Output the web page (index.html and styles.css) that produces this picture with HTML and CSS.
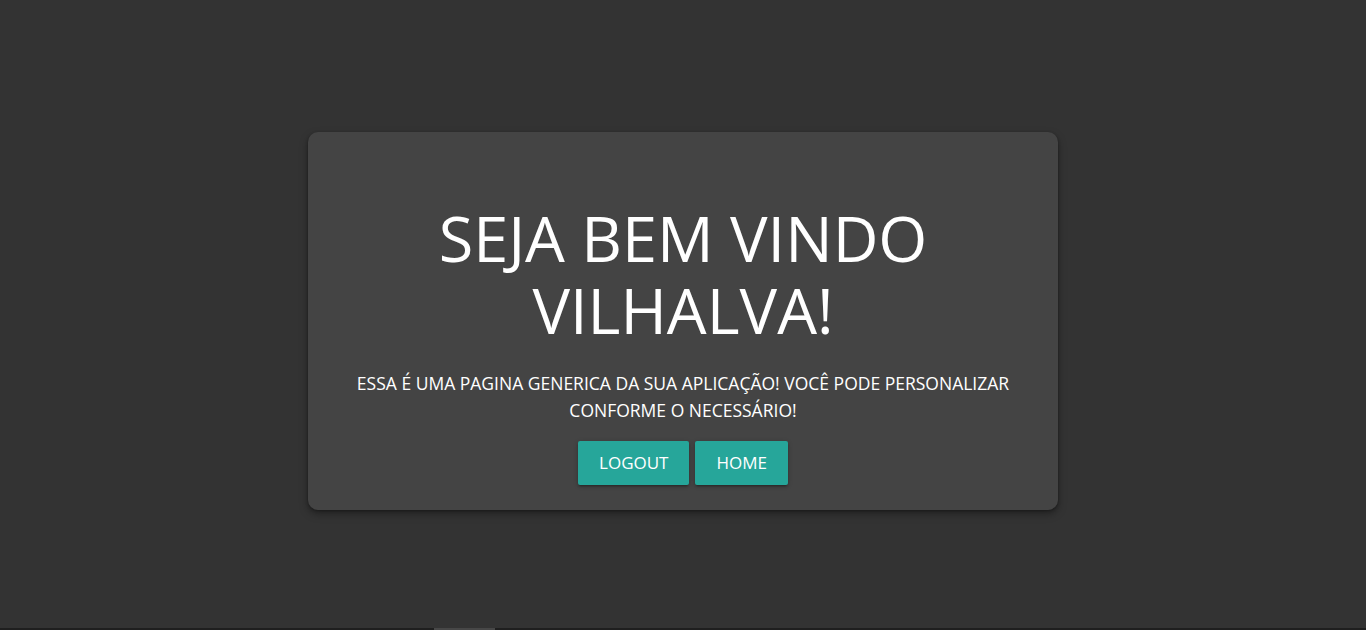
FILE: index.html
```html
<!DOCTYPE html>
<html lang="pt-BR">
<head>
<meta charset="utf-8">
<title>Bem vindo</title>
<link rel="stylesheet" href="styles.css">
</head>
<body>
<main class="page">
  <section class="card">
    <h1 class="title">SEJA BEM VINDO VILHALVA!</h1>
    <p class="lead">ESSA É UMA PAGINA GENERICA DA SUA APLICAÇÃO! VOCÊ PODE PERSONALIZAR CONFORME O NECESSÁRIO!</p>
    <div class="actions">
      <a class="btn" href="#">LOGOUT</a>
      <a class="btn" href="#">HOME</a>
    </div>
  </section>
</main>
<div class="scrollbar"><div class="thumb"></div></div>
</body>
</html>
```
FILE: styles.css
```css
html, body {
  margin: 0;
  height: 100%;
}
body {
  background: #333333;
  font-family: "Open Sans", "Noto Sans", sans-serif;
  color: #ffffff;
  overflow: hidden;
}
.page {
  display: flex;
  justify-content: center;
  padding-top: 132px;
}
.card {
  box-sizing: border-box;
  width: 750px;
  height: 378px;
  background: #444444;
  border-radius: 10px;
  box-shadow: 0 4px 8px rgba(0,0,0,0.35), 0 1px 3px rgba(0,0,0,0.3);
  display: flex;
  flex-direction: column;
  align-items: center;
  padding: 70px 20px 0;
  text-align: center;
}
.title {
  margin: 0;
  font-weight: 400;
  font-size: 63px;
  line-height: 72px;
  width: 520px;
}
.lead {
  margin: 24px 0 0;
  font-size: 17.5px;
  line-height: 27px;
  width: 700px;
}
.actions {
  display: flex;
  gap: 6px;
  margin-top: 17px;
}
.btn {
  display: block;
  height: 44px;
  line-height: 44px;
  padding: 0 21px;
  background: #26a69a;
  color: #ffffff;
  text-decoration: none;
  font-size: 17px;
  border-radius: 2px;
  box-shadow: 0 2px 2px rgba(0,0,0,0.14), 0 3px 1px -2px rgba(0,0,0,0.12), 0 1px 5px rgba(0,0,0,0.2);
}
.scrollbar {
  position: fixed;
  left: 0;
  right: 0;
  bottom: 0;
  height: 2px;
  background: #1f1f1f;
}
.thumb {
  margin-left: 434px;
  width: 61px;
  height: 2px;
  background: #474747;
}
```
